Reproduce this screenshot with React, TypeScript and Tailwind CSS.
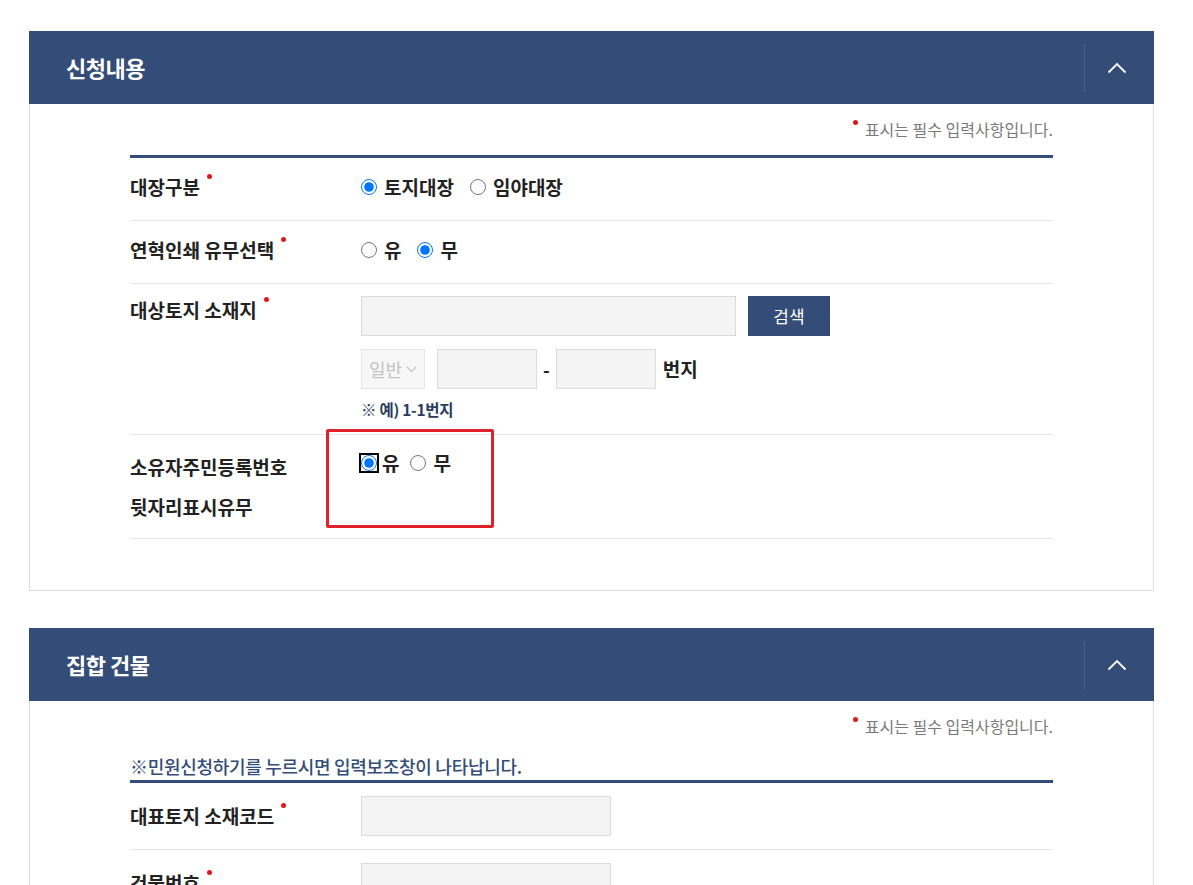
import type { ReactNode } from "react";

const font = { fontFamily: '"Noto Sans CJK KR", "Noto Sans", sans-serif' };

function Dot() {
  return <span className="ml-[7px] inline-block h-[5px] w-[5px] -translate-y-[13px] rounded-full bg-[#e3161c] align-middle" />;
}

function Header({ title }: { title: string }) {
  return (
    <div className="flex h-[73px] items-center bg-[#344c78] pl-[37px]">
      <h2 className="flex-1 text-[22px] font-bold tracking-[-0.5px] text-white">{title}</h2>
      <div className="h-[48px] w-px bg-[#4b6290]" />
      <button className="flex w-[69px] items-center justify-center pr-[5px]">
        <svg width="20" height="12" viewBox="0 0 20 12" fill="none">
          <polyline points="1.5,10.5 10,2 18.5,10.5" stroke="white" strokeWidth="1.8" />
        </svg>
      </button>
    </div>
  );
}

function Required() {
  return (
    <div className="flex justify-end pt-[13px] text-[16px] leading-[24px] text-[#7a7a7a]">
      <span className="mr-[7px] inline-block h-[5px] w-[5px] translate-y-[3px] rounded-full bg-[#e3161c]" />
      표시는 필수 입력사항입니다.
    </div>
  );
}

function Row({
  label,
  children,
  top = "pt-[13px] pb-[17px]",
  lead = "leading-[32px]",
}: {
  label: ReactNode;
  children: ReactNode;
  top?: string;
  lead?: string;
}) {
  return (
    <div className={`flex border-b border-[#e6e6e6] ${top}`}>
      <div className={`w-[231px] shrink-0 text-[19px] font-semibold text-[#222] ${lead}`}>{label}</div>
      <div className="flex-1">{children}</div>
    </div>
  );
}

function Radio({ name, label, checked }: { name: string; label: string; checked?: boolean }) {
  return (
    <label className="mr-[16px] inline-flex items-center text-[19px] font-semibold leading-[32px] text-[#222]">
      <input type="radio" name={name} defaultChecked={checked} className="m-0 mr-[7px] h-4 w-4 accent-[#0075ff]" />
      {label}
    </label>
  );
}

function Input({ w }: { w: string }) {
  return <input className={`h-[40px] ${w} border border-[#dcdcdc] bg-[#f4f4f4] outline-none`} />;
}

export default function App() {
  return (
    <div className="min-h-screen bg-white pb-10 pl-[29px] pt-[31px]" style={font}>
      <section className="w-[1125px]">
        <Header title="신청내용" />
        <div className="border-x border-b border-[#dddddd] px-[100px] pb-[51px]">
          <Required />
          <div className="mt-[14px] border-t-[3px] border-[#344c78]">
            <Row label={<>대장구분<Dot /></>}>
              <div className="flex items-center">
                <Radio name="a" label="토지대장" checked />
                <Radio name="a" label="임야대장" />
              </div>
            </Row>
            <Row label={<>연혁인쇄 유무선택<Dot /></>}>
              <div className="flex items-center">
                <Radio name="b" label="유" />
                <Radio name="b" label="무" checked />
              </div>
            </Row>
            <Row label={<>대상토지 소재지<Dot /></>} top="pt-[10px] pb-[14px]">
              <div className="pt-[2px]">
                <div className="flex items-center gap-[12px]">
                  <Input w="w-[375px]" />
                  <button className="h-[40px] w-[82px] bg-[#344c78] text-[17px] text-white">검색</button>
                </div>
                <div className="mt-[13px] flex items-center">
                  <div className="flex h-[40px] w-[64px] items-center justify-center gap-[4px] border border-[#e6e6e6] bg-[#f7f7f7] text-[18px] text-[#c4c4c4]">
                    일반
                    <svg width="11" height="7" viewBox="0 0 11 7" fill="none">
                      <polyline points="1,1 5.5,5.5 10,1" stroke="#c4c4c4" strokeWidth="1.2" />
                    </svg>
                  </div>
                  <div className="ml-[12px]">
                    <Input w="w-[100px]" />
                  </div>
                  <span className="mx-[6px] text-[18px] font-semibold text-[#222]">-</span>
                  <Input w="w-[100px]" />
                  <span className="ml-[7px] text-[19px] font-semibold text-[#222]">번지</span>
                </div>
                <p className="mt-[9px] text-[15.5px] font-semibold leading-[22px] tracking-[-0.3px] text-[#2d3c5c]">※ 예) 1-1번지</p>
              </div>
            </Row>
            <Row
              label={<div className="leading-[40px]">소유자주민등록번호<br />뒷자리표시유무</div>}
              top="pt-[12px] pb-[11px]"
            >
              <div className="relative">
                <div className="flex items-center">
                  <label className="inline-flex items-center text-[19px] font-semibold leading-[32px] text-[#222]">
                    <input
                      type="radio"
                      name="c"
                      defaultChecked
                      className="m-0 mr-[5px] h-4 w-4 rounded-[3px] accent-[#0075ff] outline-2 outline-black"
                    />
                    유
                  </label>
                  <label className="ml-[11px] inline-flex items-center text-[19px] font-semibold leading-[32px] text-[#222]">
                    <input type="radio" name="c" className="m-0 mr-[7px] h-4 w-4" />
                    무
                  </label>
                </div>
                <div className="pointer-events-none absolute left-[-35px] top-[-18px] h-[99px] w-[168px] rounded-[2px] border-[3px] border-[#e0222a]" />
              </div>
            </Row>
          </div>
        </div>
      </section>

      <section className="mt-[37px] w-[1125px]">
        <Header title="집합 건물" />
        <div className="border-x border-b border-[#dddddd] px-[100px] pb-[51px]">
          <Required />
          <p className="mt-[16px] text-[18px] font-medium leading-[24px] tracking-[-0.3px] text-[#344c78]">
            ※민원신청하기를 누르시면 입력보조창이 나타납니다.
          </p>
          <div className="mt-[2px] border-t-[3px] border-[#344c78]">
            <Row label={<>대표토지 소재코드<Dot /></>} top="pt-[13px] pb-[13px]" lead="leading-[40px]">
              <Input w="w-[250px]" />
            </Row>
            <Row label={<>건물번호<Dot /></>} top="pt-[13px] pb-[12px]" lead="leading-[40px]">
              <Input w="w-[250px]" />
            </Row>
          </div>
        </div>
      </section>
    </div>
  );
}
